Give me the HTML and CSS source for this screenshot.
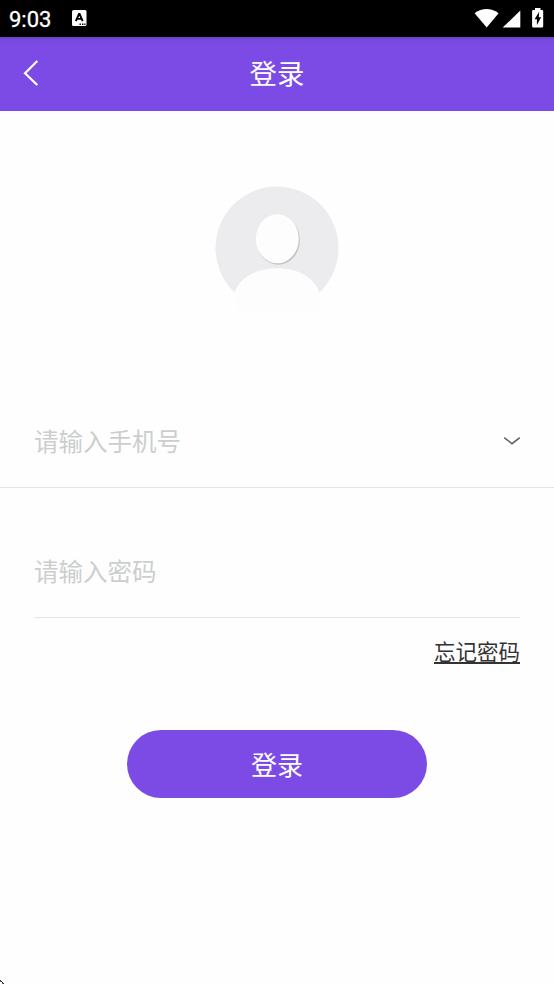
FILE: index.html
```html
<!DOCTYPE html>
<html lang="zh-CN">
<head>
<meta charset="utf-8">
<meta name="viewport" content="width=device-width, initial-scale=1">
<title>登录</title>
<link rel="stylesheet" href="styles.css">
</head>
<body>
<div class="status">
  <span class="clock">9:03</span>
  <svg class="notice" width="15" height="16" viewBox="0 0 15 16"><rect width="14.5" height="16" rx="1.5" fill="#fff"/><path d="M3.8 11.2 7 4h.6l3.1 7.2M5 8.9h4.6" fill="none" stroke="#000" stroke-width="1.9"/><path d="M7.5 13.5h1.4v1.4H7.5zM10 13.5h1.4v1.4H10zM12.3 13.5h1.2v1.4h-1.2z" fill="#000"/></svg>
  <svg class="signals" width="70" height="20" viewBox="474 8 70 20" fill="#fff"><path d="M474.6 13.2Q486.500 4.800 498.600 13.200L486.700 27.500Z"/><path d="M520.300 10.500V27.500H502.700Z"/><path d="M535 8h5.500v2H542q1.200 0 1.200 1.200v15q0 1.300-1.200 1.300h-8.700q-1.200 0-1.200-1.300v-15q0-1.200 1.200-1.200H535z"/><path d="M539.200 11.800 534.600 19.300h2.300v5.700l4.300-7.700h-2.400z" fill="#000"/></svg>
</div>
<header class="bar">
  <svg class="back" width="16" height="26" viewBox="0 0 16 26"><path d="M14.300 1 2 13.300 14.300 25" fill="none" stroke="#fff" stroke-width="2.200"/></svg>
  <h1>登录</h1>
</header>
<main>
  <svg class="avatar" width="124" height="124" viewBox="0 0 124 124">
    <circle cx="62" cy="62" r="61.500" fill="#ececee"/>
    <ellipse cx="63.300" cy="54.200" rx="21.600" ry="24.500" fill="#c4c4c5"/>
    <ellipse cx="62.300" cy="52.800" rx="21.500" ry="24.500" fill="#fdfdfd"/>
    <path d="M19.500 107C24 92 41 82.300 62 82.300S100 92 104.500 107V124H19.500z" fill="#fdfdfd"/>
  </svg>
  <form>
    <div class="field phone">
      <input type="tel" placeholder="请输入手机号">
      <svg class="chevron" width="18" height="10" viewBox="0 0 18 10"><path d="M1.200 1.700 9 7.700l7.800-6" fill="none" stroke="#606060" stroke-width="1.500"/></svg>
    </div>
    <div class="field password">
      <input type="password" placeholder="请输入密码">
    </div>
    <div class="help"><a class="forgot">忘记密码</a></div>
    <button type="button" class="submit">登录</button>
  </form>
</main>
<svg class="corner" width="5" height="4" viewBox="0 0 5 4"><path d="M0 0h1v1H0zM1 1h1v1H1zM2 2h1v1H2zM3 3h1v1H3z" fill="#222"/><path d="M0 1h1v1H0zM2 3h1v1H2z" fill="#777"/></svg>
</body>
</html>
```
FILE: styles.css
```css
* { box-sizing: border-box; }
body {
  margin: 0;
  height: 984px;
  overflow: hidden;
  background: #fefefe;
  font-family: "Noto Sans CJK SC", sans-serif;
  display: flex;
  flex-direction: column;
}
.status {
  flex: none;
  height: 37px;
  background: #000;
  display: flex;
  align-items: center;
  padding: 0 10px 2px 9px;
}
.clock {
  width: 63px;
  font: 400 22px/35px Roboto, sans-serif;
  -webkit-text-stroke: 0.300px #fff;
  color: #fff;
  padding-top: 3px;
}
.signals { margin-left: auto; }
.bar {
  flex: none;
  height: 73.500px;
  display: grid;
  grid-template-columns: 60px 1fr 60px;
  align-items: center;
  padding-bottom: 2px;
  background: linear-gradient(#6c40c9, #7848de 3px, #7c4be6 8px);
}
.back { margin-left: 23px; }
.bar h1 {
  margin: 0;
  padding-bottom: 1px;
  text-align: center;
  font-size: 27.400px;
  font-weight: 400;
  line-height: 40px;
  color: #fff;
}
main { flex: 1; padding-top: 75.500px; }
.avatar { display: block; margin: 0 auto; }
.field {
  display: flex;
  align-items: center;
  border-bottom: 1px solid #e5e5e5;
}
.field input {
  flex: 1;
  min-width: 0;
  height: 40px;
  padding: 0;
  border: 0;
  outline: 0;
  background: transparent;
  font: 400 24.500px/36px "Noto Sans CJK SC", sans-serif;
  color: #333;
}
.field input::placeholder { color: #cccece; opacity: 1; }
.phone { height: 94px; margin-top: 84px; padding: 0 33px 0 34px; }
.phone .chevron { margin-top: 1px; }
.password { height: 90px; margin: 40px 34px 0; padding-bottom: 4px; }
.help { display: flex; justify-content: flex-end; padding: 17px 34px 0; }
.forgot {
  font-size: 21.500px;
  line-height: 32px;
  color: #333;
  text-decoration: underline;
  text-decoration-thickness: 1.500px;
  text-underline-offset: 2px;
}
.submit {
  display: block;
  width: 300px;
  height: 68px;
  margin: 63px auto 0;
  padding: 0;
  border: 0;
  border-radius: 34px;
  background: #7c4be6;
  color: #fff;
  font: 400 26px/38px "Noto Sans CJK SC", sans-serif;
}
.corner { flex: none; display: block; }
```
